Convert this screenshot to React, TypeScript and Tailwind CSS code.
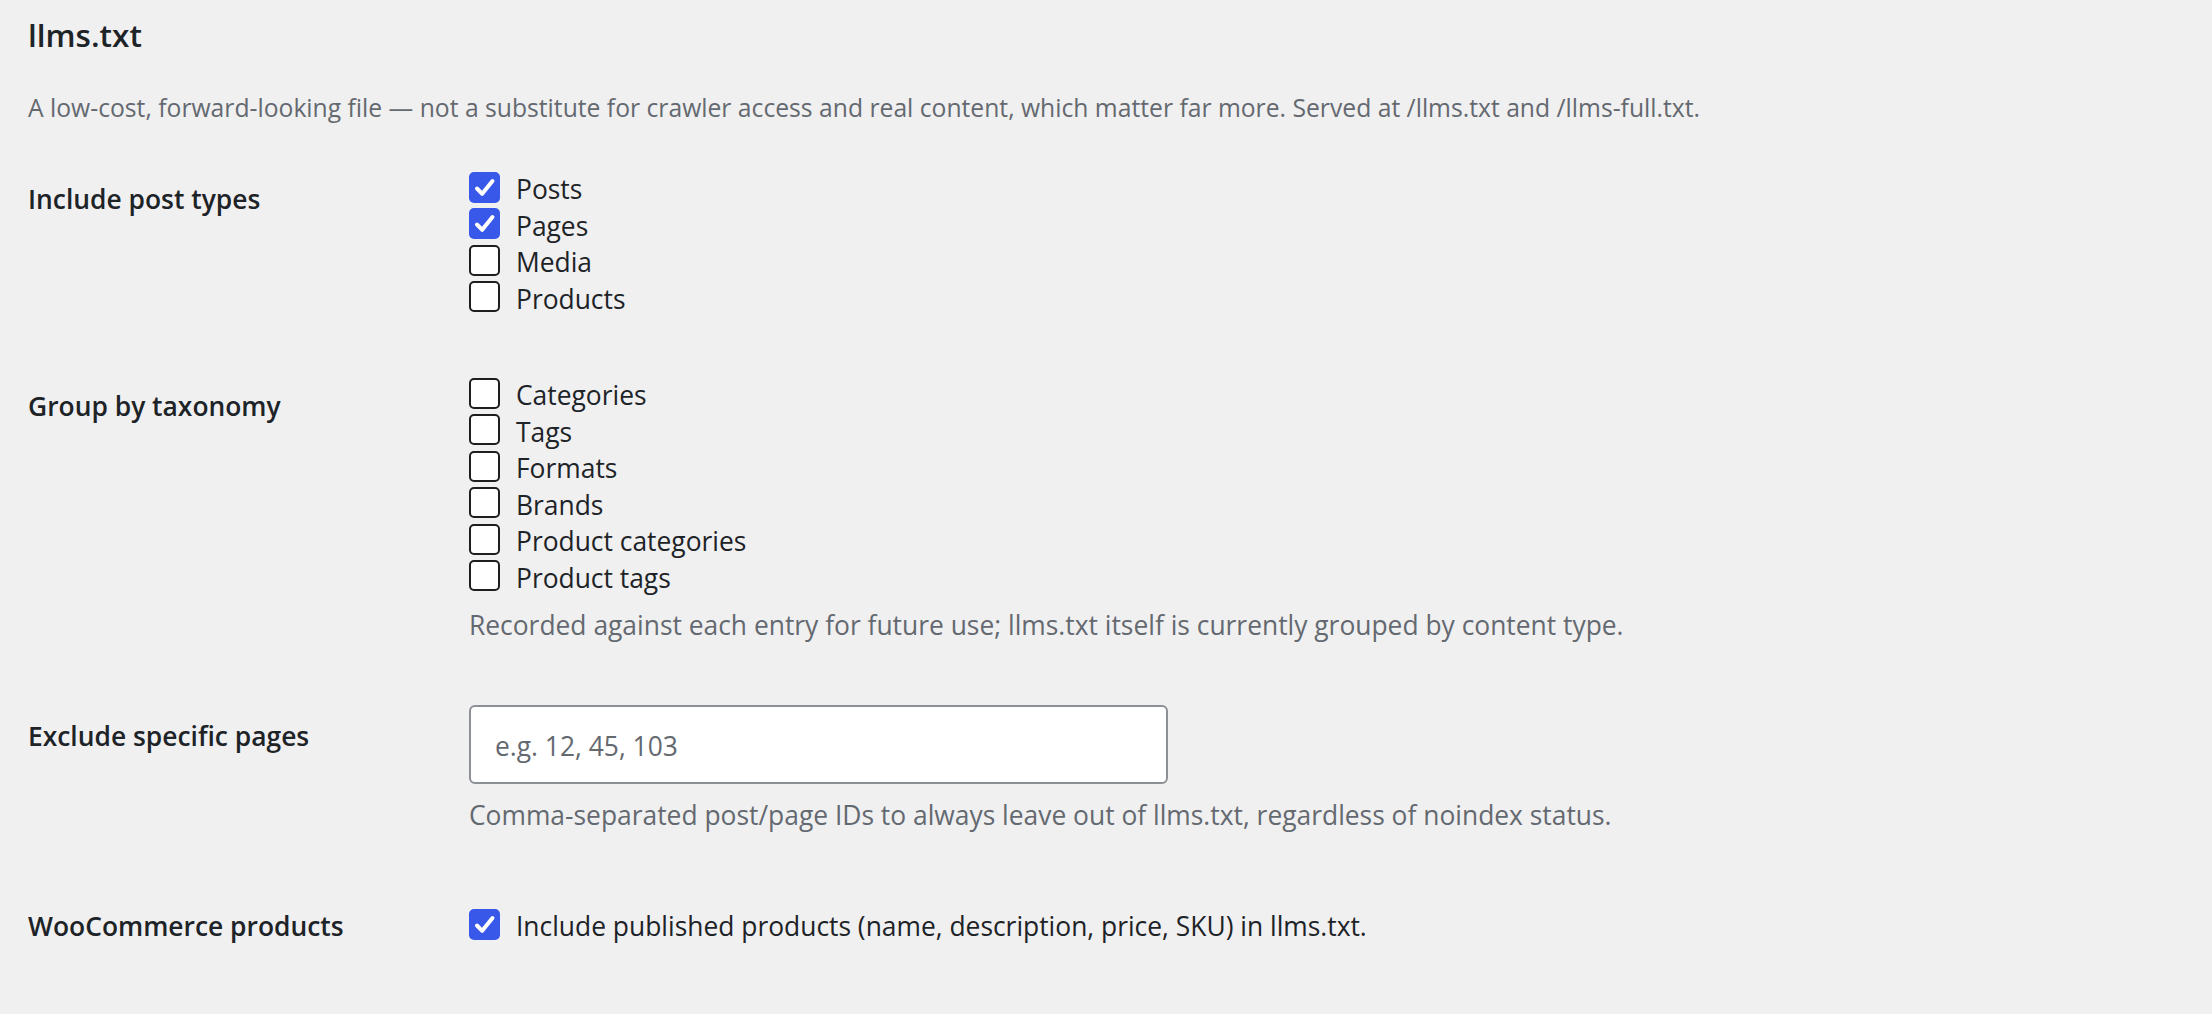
import React from 'react'

// llms.txt settings screen — WP admin form-table look, scaled up

function Box({ checked }: { checked?: boolean }) {
  if (checked) {
    return (
      <span className="flex h-[31px] w-[31px] shrink-0 items-center justify-center rounded-[5px] bg-[#3858e9]">
        <svg width="31" height="31" viewBox="0 0 31 31" fill="none" aria-hidden="true">
          <path d="M8 16.5L13.2 21.8L23.5 9" stroke="#FFFFFF" strokeWidth="4" strokeLinecap="round" strokeLinejoin="round" />
        </svg>
      </span>
    )
  }
  return <span className="h-[31px] w-[31px] shrink-0 rounded-[5px] border-2 border-[#1e1e1e] bg-white" />
}

function Option({ label, checked }: { label: string; checked?: boolean }) {
  return (
    <label className="flex h-[36.5px] items-center gap-[16px]">
      <Box checked={checked} />
      <span className="pt-[4px] text-[26.4px] leading-[36px] text-[#1d2327]">{label}</span>
    </label>
  )
}

const POST_TYPES = [
  { label: 'Posts', checked: true },
  { label: 'Pages', checked: true },
  { label: 'Media' },
  { label: 'Products' },
]

const TAXONOMIES = ['Categories', 'Tags', 'Formats', 'Brands', 'Product categories', 'Product tags']

export default function App() {
  return (
    <div className="min-h-screen bg-[#f0f0f1] pl-[28px] pt-[13px] font-['Open_Sans',sans-serif] text-[#1d2327]">
      <h2 className="text-[31.5px] font-semibold leading-[44px]">llms.txt</h2>
      <p className="mt-[33px] text-[24.7px] leading-[36px] text-[#646970]">
        A low-cost, forward-looking file — not a substitute for crawler access and real content, which matter far
        more. Served at /llms.txt and /llms-full.txt.
      </p>

      {/* Include post types */}
      <div className="mt-[43px] flex">
        <div className="w-[441px] shrink-0 pt-[13px] text-[26.4px] font-semibold leading-[34px]">Include post types</div>
        <div className="flex flex-col">
          {POST_TYPES.map((p) => (
            <Option key={p.label} label={p.label} checked={p.checked} />
          ))}
        </div>
      </div>

      {/* Group by taxonomy */}
      <div className="mt-[60px] flex">
        <div className="w-[441px] shrink-0 pt-[14px] text-[26.4px] font-semibold leading-[34px]">Group by taxonomy</div>
        <div className="flex flex-col">
          {TAXONOMIES.map((t) => (
            <Option key={t} label={t} />
          ))}
          <p className="mt-[12px] text-[26.4px] leading-[39px] text-[#646970]">
            Recorded against each entry for future use; llms.txt itself is currently grouped by content type.
          </p>
        </div>
      </div>

      {/* Exclude specific pages */}
      <div className="mt-[60px] flex">
        <div className="w-[441px] shrink-0 pt-[14px] text-[26.4px] font-semibold leading-[34px]">
          Exclude specific pages
        </div>
        <div className="flex flex-col">
          <input
            type="text"
            placeholder="e.g. 12, 45, 103"
            className="h-[79px] w-[699px] rounded-[6px] border-2 border-[#8c8f94] bg-white px-[24px] pt-[2px] text-[26.4px] text-[#1d2327] outline-none placeholder:text-[#646970]"
          />
          <p className="mt-[12px] text-[26.4px] leading-[39px] text-[#646970]">
            Comma-separated post/page IDs to always leave out of llms.txt, regardless of noindex status.
          </p>
        </div>
      </div>

      {/* WooCommerce products */}
      <div className="mt-[71px] flex pb-[40px]">
        <div className="w-[441px] shrink-0 pt-[3px] text-[26.4px] font-semibold leading-[34px]">WooCommerce products</div>
        <div className="flex flex-col">
          <Option label="Include published products (name, description, price, SKU) in llms.txt." checked />
        </div>
      </div>
    </div>
  )
}
